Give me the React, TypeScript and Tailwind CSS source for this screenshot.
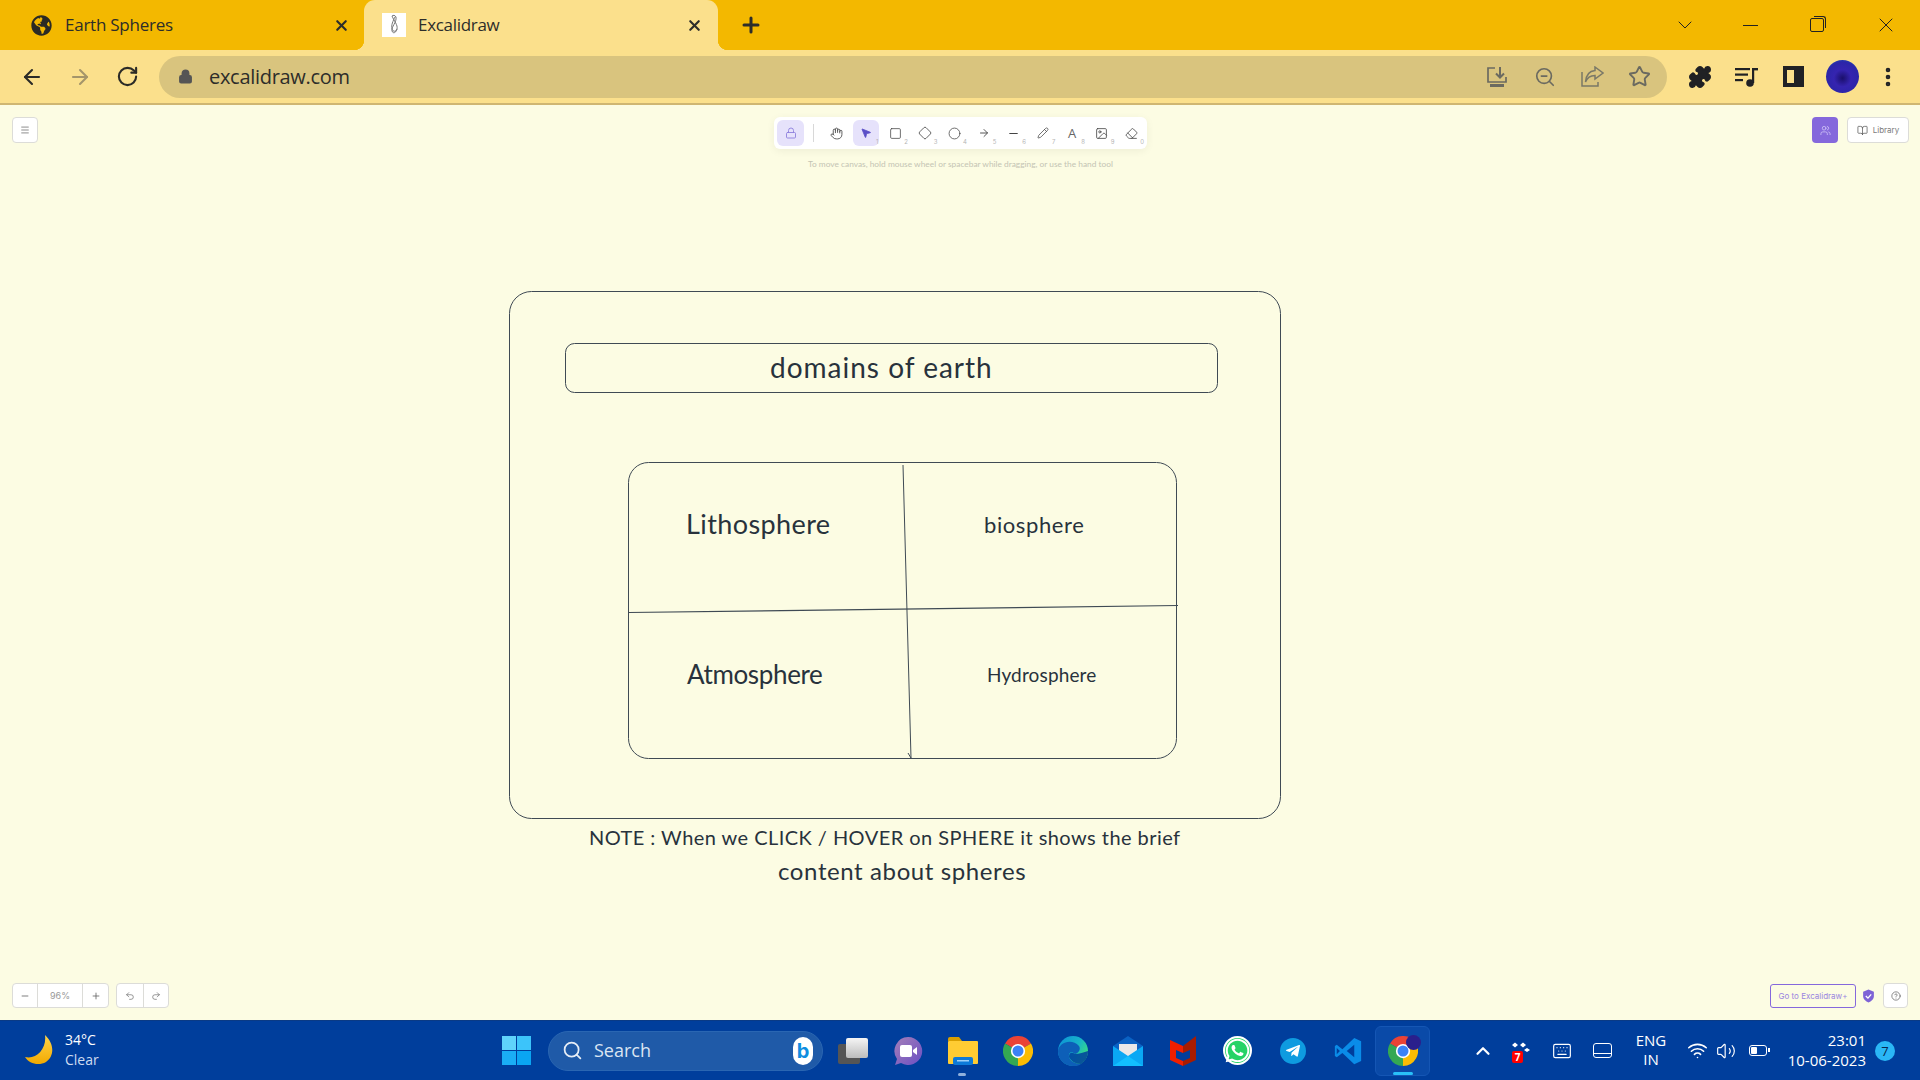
import React from "react";
import {
  ArrowLeft, ArrowRight, RotateCw, Lock, Plus, X, ChevronDown, Minus, ZoomOut, Star, Search, Menu, Users, BookOpen,
  Undo2, Redo2, CircleHelp, Wifi, Volume2, Keyboard, ChevronUp, Hand, MousePointer2, Square, Diamond, Circle, Pencil,
  Image as ImageIcon, Eraser, EllipsisVertical, Puzzle,
} from "lucide-react";
import { FaGlobeAmericas, FaWhatsapp, FaTelegramPlane } from "react-icons/fa";

const ChromeLogo = ({ size = 30 }: { size?: number }) => (
  <svg width={size} height={size} viewBox="0 0 24 24">
    <path d="M12 12L1.6 6A12 12 0 0 1 22.4 6Z" fill="#ea4335" />
    <path d="M12 12L22.4 6A12 12 0 0 1 12 24Z" fill="#fbbc04" />
    <path d="M12 12L12 24A12 12 0 0 1 1.6 6Z" fill="#34a853" />
    <circle cx="12" cy="12" r="5.7" fill="#fff" />
    <circle cx="12" cy="12" r="4.4" fill="#3b82f6" />
  </svg>
);

const DownloadMonitor = () => (
  <svg width="22" height="22" viewBox="0 0 22 22" fill="none" stroke="#6b6a60" strokeWidth="1.7">
    <path d="M9 2H2v14h18v-5" />
    <path d="M14 1v10M10 7.5l4 4 4-4" strokeWidth="2" />
    <path d="M4 19.5h14" strokeWidth="3" />
  </svg>
);

const ShareBox = () => (
  <svg width="23" height="21" viewBox="0 0 23 21" fill="none" stroke="#7a7867" strokeWidth="1.5">
    <path d="M1 6v14h16v-4" />
    <path d="M14 1l8 6-8 6V9.5C9 9.5 6 12 4.5 16 5 9.5 8.5 5 14 4.5z" />
  </svg>
);

const QueueMusic = () => (
  <svg width="24" height="20" viewBox="0 0 24 20" fill="#202124">
    <rect x="0" y="1" width="15" height="2.2" />
    <rect x="0" y="6.5" width="13" height="2.2" />
    <rect x="0" y="12" width="8" height="2.2" />
    <circle cx="15" cy="16" r="3.8" />
    <rect x="17" y="1" width="2.2" height="15" />
    <rect x="17" y="1" width="6" height="2.4" />
  </svg>
);

const tools = [
  { n: "", icon: <Hand size={13} strokeWidth={1.6} /> },
  { n: "1", icon: <MousePointer2 size={12} strokeWidth={1.6} fill="#5b4fc7" color="#5b4fc7" />, active: true },
  { n: "2", icon: <Square size={13} strokeWidth={1.4} /> },
  { n: "3", icon: <Diamond size={14} strokeWidth={1.4} /> },
  { n: "4", icon: <Circle size={13} strokeWidth={1.4} /> },
  { n: "5", icon: <ArrowRight size={12} strokeWidth={1.8} /> },
  { n: "6", icon: <Minus size={13} strokeWidth={2} /> },
  { n: "7", icon: <Pencil size={12} strokeWidth={1.5} /> },
  { n: "8", icon: <span className="text-[13px] leading-none font-medium text-[#666]">A</span> },
  { n: "9", icon: <ImageIcon size={13} strokeWidth={1.5} /> },
  { n: "0", icon: <Eraser size={13} strokeWidth={1.5} /> },
];

const Sketch = ({ className, children }: { className: string; children: React.ReactNode }) => (
  <div className={`absolute whitespace-nowrap leading-none text-[#28323c] font-normal font-['Lato','Noto_Sans',sans-serif] ${className}`}>
    {children}
  </div>
);

const TaskIcon = ({ children, dot, active }: { children: React.ReactNode; dot?: boolean; active?: boolean }) => (
  <div className={`relative w-[55px] h-[50px] flex items-center justify-center rounded-md ${active ? "bg-[#0a4aa8] border border-[#1556b4]" : ""}`}>
    {children}
    {dot && <span className="absolute bottom-[0px] left-[23px] w-[8px] h-[3px] rounded-full bg-[#8fb0dc]" />}
    {active && <span className="absolute bottom-[0px] left-[17px] w-[20px] h-[3px] rounded-full bg-[#29c0f8]" />}
  </div>
);

export default function App() {
  return (
    <div className="w-[1920px] h-[1080px] flex flex-col overflow-hidden font-['Open_Sans',sans-serif] text-[#2d2d2a]">
      {/* Tab strip */}
      <div className="h-[50px] shrink-0 bg-[#f3b800] flex items-stretch">
        <div className="w-[364px] flex items-center pl-[31px] pr-[14px]">
          <FaGlobeAmericas size={21} color="#2b2a24" />
          <span className="ml-[13px] text-[17px] flex-1 tracking-[-0.25px]">Earth Spheres</span>
          <X size={17} strokeWidth={3} />
        </div>
        <div className="relative w-[354px] bg-[#fbe08c] rounded-t-[11px] flex items-center pl-[18px] pr-[15px]">
          <span className="absolute left-[-10px] bottom-0 w-[10px] h-[10px] bg-[radial-gradient(circle_at_0_0,#f3b800_10px,#fbe08c_10.5px)]" />
          <span className="absolute right-[-10px] bottom-0 w-[10px] h-[10px] bg-[radial-gradient(circle_at_100%_0,#f3b800_10px,#fbe08c_10.5px)]" />
          <div className="w-[24px] h-[24px] bg-white flex items-center justify-center">
            <svg width="12" height="22" viewBox="0 0 12 22" fill="none" stroke="#777" strokeWidth="1">
              <path d="M4 2c2 5 6 9 5 13-1 4-4 5-5 2-1-4 5-9 4-14-1-2-3-2-4-1z" />
              <path d="M7 3c-2 4-4 8-3 12 1 3 4 3 5 0" />
            </svg>
          </div>
          <span className="ml-[12px] text-[17px] flex-1 tracking-[-0.3px]">Excalidraw</span>
          <X size={17} strokeWidth={3} />
        </div>
        <div className="ml-[21px] flex items-center"><Plus size={24} strokeWidth={3} /></div>
        <div className="ml-auto flex items-center text-[#222]">
          <ChevronDown size={24} strokeWidth={1} className="mr-[46px]" />
          <span className="w-[15px] h-px bg-[#222] mr-[52px]" />
          <div className="relative w-[14px] h-[14px] border border-[#222] rounded-[2px] mr-[50px] after:absolute after:content-[''] after:top-[-3px] after:right-[-3px] after:w-[12px] after:h-[12px] after:border-t after:border-r after:border-[#222] after:rounded-tr-[3px]" />
          <X size={24} strokeWidth={1} className="mr-[22px]" />
        </div>
      </div>

      {/* Address toolbar */}
      <div className="h-[55px] shrink-0 bg-[#fbe08c] border-b-2 border-[#cfb672] flex items-center">
        <div className="w-[159px] flex items-center text-[#2b2b27] pl-[20px]">
          <ArrowLeft size={24} strokeWidth={2.1} />
          <ArrowRight size={24} strokeWidth={2.1} className="ml-[24px] text-[#a4956a]" />
          <RotateCw size={23} strokeWidth={2.2} className="ml-[24px]" />
        </div>
        <div className="w-[1508px] h-[42px] rounded-full bg-[#d9c47e] flex items-center pl-[19px]">
          <Lock size={15} strokeWidth={2.6} fill="#555" color="#555" />
          <span className="ml-[16px] text-[20px] tracking-[-0.3px]">excalidraw.com</span>
          <div className="ml-auto flex items-center text-[#6b6a60]">
            <DownloadMonitor />
            <ZoomOut size={22} strokeWidth={1.8} className="ml-[26px]" />
            <div className="ml-[25px]"><ShareBox /></div>
            <Star size={23} strokeWidth={2} className="ml-[24px] mr-[16px]" />
          </div>
        </div>
        <div className="flex items-center text-[#202124]">
          <Puzzle size={24} fill="#202124" strokeWidth={2} className="ml-[21px]" />
          <div className="ml-[23px]"><QueueMusic /></div>
          <div className="ml-[24px] w-[21px] h-[21px] border-[4px] border-[#202124] border-r-[10px]" />
          <div className="ml-[22px] w-[33px] h-[33px] rounded-full bg-[radial-gradient(circle_at_50%_55%,#1a0f6b_0%,#3524b0_35%,#2c25a8_65%,#0d6fc0_100%)]" />
          <EllipsisVertical size={24} strokeWidth={2.6} className="ml-[17px]" />
        </div>
      </div>

      {/* Canvas */}
      <div className="relative flex-1 bg-[#fcfce3] flex flex-col justify-between">
        <svg className="absolute inset-0 w-full h-full" viewBox="0 0 1920 915" fill="none" stroke="#3f4a54" strokeWidth="1">
          <rect x="509.5" y="186.5" width="771" height="527" rx="22" />
          <rect x="565.5" y="238.5" width="652" height="49" rx="9" />
          <rect x="628.5" y="357.5" width="548" height="296" rx="20" />
          <path d="M903 360L911 653M908 648l3 5" />
          <path d="M629 507.5L1178 500.5" strokeWidth="1.2" />
        </svg>
        <Sketch className="left-[770px] top-[248px] text-[28px] tracking-[1px]">domains of earth</Sketch>
        <Sketch className="left-[686px] top-[405px] text-[27px] tracking-[0.4px]">Lithosphere</Sketch>
        <Sketch className="left-[984px] top-[409px] text-[22px] tracking-[0.6px]">biosphere</Sketch>
        <Sketch className="left-[687px] top-[556px] text-[26px] tracking-[-0.35px]">Atmosphere</Sketch>
        <Sketch className="left-[987px] top-[560px] text-[19px] tracking-[0.15px]">Hydrosphere</Sketch>
        <Sketch className="left-[589px] top-[722px] text-[20px] tracking-[0.45px]">NOTE : When we CLICK / HOVER on SPHERE it shows the brief</Sketch>
        <Sketch className="left-[778px] top-[754px] text-[24px] tracking-[0.6px]">content about spheres</Sketch>

        {/* Top UI row */}
        <div className="relative flex items-start pt-[12px] pl-[12px] pr-[11px]">
          <div className="flex-1">
            <div className="w-[26px] h-[26px] bg-white border border-[#dcdcd8] rounded-[4px] flex items-center justify-center">
              <Menu size={10} color="#777" strokeWidth={2} />
            </div>
          </div>
          <div className="flex flex-col items-center">
            <div className="h-[32px] w-[373px] bg-white rounded-[6px] shadow-[0_2px_8px_rgba(0,0,0,0.06)] flex items-center pl-[3px] text-[#444]">
              <div className="w-[27px] h-[26px] rounded-[6px] bg-[#e6e2fb] flex items-center justify-center">
                <Lock size={12} color="#8d80dc" strokeWidth={1.8} />
              </div>
              <span className="mx-[9px] w-px h-[18px] bg-[#d8d8d8]" />
              <div className="flex gap-[3.5px]">
                {tools.map((t, i) => (
                  <div key={i} className={`relative w-[26px] h-[26px] rounded-[6px] flex items-center justify-center ${t.active ? "bg-[#e6e2fb]" : ""}`}>
                    {t.icon}
                    {t.n && <span className="absolute right-[0px] bottom-[0px] text-[6px] leading-[8px] text-[#b5b5b5] font-['Inter',sans-serif]">{t.n}</span>}
                  </div>
                ))}
              </div>
            </div>
            <div className="mt-[10px] text-[8.35px] leading-[11px] text-[#c4c4b4] font-['Lato',sans-serif] whitespace-nowrap">
              To move canvas, hold mouse wheel or spacebar while dragging, or use the hand tool
            </div>
          </div>
          <div className="flex-1 flex justify-end gap-[9px]">
            <div className="w-[26px] h-[26px] rounded-[4px] bg-[#8568dc] flex items-center justify-center">
              <Users size={11} color="#d9cffa" strokeWidth={1.6} />
            </div>
            <div className="w-[62px] h-[26px] bg-white border border-[#dcdcd8] rounded-[4px] flex items-center justify-center gap-[5px] text-[#7b7b7b]">
              <BookOpen size={11} color="#555" strokeWidth={1.6} />
              <span className="text-[8px] font-['Inter',sans-serif]">Library</span>
            </div>
          </div>
        </div>

        {/* Bottom UI row */}
        <div className="relative flex items-center pl-[12px] pr-[12px] pb-[12px] text-[#666]">
          <div className="h-[25px] w-[97px] bg-white border border-[#dcdcd8] rounded-[4px] flex items-center">
            <div className="w-[24px] flex justify-center"><Minus size={10} strokeWidth={2} /></div>
            <div className="w-[46px] h-full border-x border-[#dcdcd8] flex items-center justify-center text-[9px] font-['Inter',sans-serif] text-[#999]">96%</div>
            <div className="w-[25px] flex justify-center"><Plus size={10} strokeWidth={2} /></div>
          </div>
          <div className="ml-[7px] h-[25px] w-[53px] bg-white border border-[#dcdcd8] rounded-[4px] flex items-center">
            <div className="w-[27px] h-full border-r border-[#dcdcd8] flex items-center justify-center"><Undo2 size={10} strokeWidth={1.6} /></div>
            <div className="flex-1 flex justify-center"><Redo2 size={10} strokeWidth={1.6} /></div>
          </div>
          <div className="ml-auto h-[24px] w-[86px] border border-[#8568dc] rounded-[3px] bg-[#fcfce3] flex items-center justify-center text-[8px] text-[#9a85e0] font-['Inter',sans-serif] whitespace-nowrap">
            Go to Excalidraw+
          </div>
          <svg className="ml-[6px]" width="13" height="14" viewBox="0 0 24 26">
            <path d="M12 1l10 4v8c0 6-5 10-10 12C7 23 2 19 2 13V5z" fill="#7e63d6" />
            <path d="M7 13l4 4 6-7" stroke="#fff" strokeWidth="2.4" fill="none" />
          </svg>
          <div className="ml-[8px] w-[25px] h-[25px] bg-white border border-[#dcdcd8] rounded-[4px] flex items-center justify-center">
            <CircleHelp size={10} color="#555" strokeWidth={1.6} />
          </div>
        </div>
      </div>

      {/* Taskbar */}
      <div className="h-[60px] shrink-0 bg-[#003e9c] border-t border-[#0a3a85] flex items-center text-white">
        <div className="w-[502px] flex items-center pl-[25px] pb-[2px]">
          <svg width="29" height="30" viewBox="0 0 29 30">
            <defs>
              <linearGradient id="moon" x1="0" y1="0" x2="0" y2="1">
                <stop offset="0" stopColor="#ffd54a" />
                <stop offset="1" stopColor="#f2a900" />
              </linearGradient>
            </defs>
            <path d="M20 0c9 8 10 21 1 27-7 4-17 2-21-5 11 3 22-8 20-22z" fill="url(#moon)" />
          </svg>
          <div className="ml-[11px] text-[14px] leading-[20px]">
            <div>34°C</div>
            <div className="text-[#cfdcf0]">Clear</div>
          </div>
        </div>
        <div className="grid grid-cols-2 gap-[1px] w-[29px] h-[29px]">
          <span className="bg-[#5fd3fb]" /><span className="bg-[#3cc4fa]" />
          <span className="bg-[#1aaef5]" /><span className="bg-[#0aa5f2]" />
        </div>
        <div className="ml-[17px] w-[275px] h-[40px] rounded-full bg-[#1f5aa8] border border-[#2a66b2] flex items-center pl-[13px] pr-[9px]">
          <Search size={21} strokeWidth={2} color="#e6edf6" />
          <span className="ml-[11px] text-[18px] text-[#dbe5f2]">Search</span>
          <div className="ml-auto w-[20px] h-[28px] rounded-[10px] bg-white flex items-center justify-center">
            <span className="text-[20px] leading-none font-bold text-[#0f8ee0] font-['Inter',sans-serif]">b</span>
          </div>
        </div>
        <div className="ml-[2px] flex items-center">
          <TaskIcon>
            <div className="relative w-[30px] h-[26px]">
              <span className="absolute left-0 bottom-0 w-[22px] h-[20px] bg-[#555] rounded-[2px]" />
              <span className="absolute right-0 top-0 w-[22px] h-[20px] bg-gradient-to-b from-[#f5f5f5] to-[#bdbdbd] rounded-[2px]" />
            </div>
          </TaskIcon>
          <TaskIcon>
            <svg width="30" height="30" viewBox="0 0 30 30">
              <defs>
                <linearGradient id="meet" x1="0" y1="0" x2="1" y2="1">
                  <stop offset="0" stopColor="#a57fb8" />
                  <stop offset="1" stopColor="#6a4fc4" />
                </linearGradient>
              </defs>
              <path d="M15 1a14 14 0 1 1-7 26l-6 2 2-6A14 14 0 0 1 15 1z" fill="url(#meet)" />
              <rect x="7" y="9" width="12" height="12" rx="2" fill="#fff" />
              <path d="M20 14l4-3v8l-4-3z" fill="#fff" />
            </svg>
          </TaskIcon>
          <TaskIcon dot>
            <svg width="30" height="28" viewBox="0 0 30 28">
              <path d="M0 2a2 2 0 0 1 2-2h9l3 4H0z" fill="#d99f00" />
              <rect x="0" y="4" width="30" height="23" rx="1" fill="#ffcc33" />
              <rect x="5" y="20" width="20" height="8" rx="2" fill="#0d7ad9" />
              <rect x="9" y="23" width="12" height="1.5" fill="#9ed0f7" />
            </svg>
          </TaskIcon>
          <TaskIcon><ChromeLogo /></TaskIcon>
          <TaskIcon>
            <svg width="30" height="30" viewBox="0 0 30 30">
              <defs>
                <linearGradient id="edge" x1="0" y1="0" x2="1" y2="0.6">
                  <stop offset="0" stopColor="#0c8fd8" />
                  <stop offset="0.6" stopColor="#17b3c9" />
                  <stop offset="1" stopColor="#3bdc7f" />
                </linearGradient>
              </defs>
              <circle cx="15" cy="15" r="15" fill="url(#edge)" />
              <path d="M0 15C1 6 14 2 21 10c2 3 0 7-4 8-3-3-7-2-6 3 1 4 6 7 12 7-3 2-5 2-8 2C6 30 0 23 0 15z" fill="#0d5fb8" />
              <path d="M17 18c4 0 9-2 13-3 0 6-3 10-7 13-6 0-10-3-12-7 0-5 3-5 6-3z" fill="#003e9c" opacity="0.85" />
            </svg>
          </TaskIcon>
          <TaskIcon>
            <svg width="30" height="30" viewBox="0 0 30 30">
              <path d="M0 10L15 0l15 10v4H0z" fill="#0a62c4" />
              <path d="M6 8h18v8l-9 5-9-5z" fill="#e8e8e8" />
              <path d="M0 10l15 10 15-10v20H0z" fill="#0aa8f4" />
              <path d="M0 30l15-10 15 10z" fill="#12bfff" />
            </svg>
          </TaskIcon>
          <TaskIcon>
            <svg width="26" height="30" viewBox="0 0 26 30">
              <path d="M0 4l13 6v7l-7-3v8l7 3v5L0 24z" fill="#f01f00" />
              <path d="M26 0v24L13 30v-5l7-3v-8l-7 3v-7z" fill="#a81c00" />
            </svg>
          </TaskIcon>
          <TaskIcon>
            <div className="w-[29px] h-[29px] rounded-full bg-[#25d366] border-[2px] border-white flex items-center justify-center">
              <FaWhatsapp size={27} color="#fff" />
            </div>
          </TaskIcon>
          <TaskIcon>
            <div className="w-[26px] h-[26px] rounded-full bg-[#0e9be0] flex items-center justify-center">
              <FaTelegramPlane size={16} color="#fff" />
            </div>
          </TaskIcon>
          <TaskIcon>
            <svg width="30" height="30" viewBox="0 0 24 24">
              <path d="M17 1.5l5.5 2.6v15.8L17 22.5 7.5 13.5 3 17l-1.5-1V8l1.5-1 4.5 3.5z" fill="#0a8ce8" />
              <path d="M17 7l-6 5 6 5z" fill="#003e9c" />
              <path d="M3 9.5v5l2.5-2.5z" fill="#003e9c" />
            </svg>
          </TaskIcon>
          <TaskIcon active>
            <div className="relative">
              <ChromeLogo />
              <span className="absolute -top-[1px] -right-[3px] w-[15px] h-[15px] rounded-full bg-[#2a1f8c]" />
            </div>
          </TaskIcon>
        </div>
        <div className="ml-auto mr-[25px] flex items-center text-[14px]">
          <div className="w-[40px] flex justify-center"><ChevronUp size={22} strokeWidth={2.4} /></div>
          <div className="w-[38px] flex justify-center">
            <div className="relative w-[20px] h-[18px]">
              <svg width="20" height="14" viewBox="0 0 20 14" fill="#fff">
                <path d="M0 3l3-2.5L6 3 3 5.5zM8 3l3-2.5L14 3l-3 2.5zM12 8l3-2 3 2-3 2z" />
              </svg>
              <span className="absolute left-0 bottom-[-3px] w-[11px] h-[12px] rounded-[2px] bg-[#f00] text-[10px] leading-[12px] text-center font-bold">7</span>
            </div>
          </div>
          <div className="w-[41px] flex justify-center"><Keyboard size={20} strokeWidth={1.4} /></div>
          <div className="w-[41px] flex justify-center">
            <div className="w-[19px] h-[15px] border-[1.5px] border-white rounded-[3px] flex flex-col">
              <span className="flex-1" />
              <span className="h-[4px] border-t-[1.5px] border-white" />
            </div>
          </div>
          <div className="w-[56px] text-center leading-[19px] text-[15px] pb-[2px]">
            <div>ENG</div>
            <div>IN</div>
          </div>
          <div className="w-[36px] flex justify-center"><Wifi size={21} strokeWidth={1.8} /></div>
          <div className="w-[22px] flex justify-center"><Volume2 size={20} strokeWidth={1.4} /></div>
          <div className="w-[42px] flex justify-center">
            <div className="relative w-[18px] h-[11px] border-[1.5px] border-white rounded-[3px] p-[1px]">
              <div className="w-[6px] h-full bg-white rounded-[1px]" />
              <span className="absolute right-[-4px] top-[2px] w-[2px] h-[4px] bg-white" />
            </div>
          </div>
          <div className="w-[87px] text-right leading-[20px] text-[15px] pb-[2px] whitespace-nowrap">
            <div>23:01</div>
            <div>10-06-2023</div>
          </div>
          <div className="ml-[9px] w-[20px] h-[20px] rounded-full bg-[#2ab7f6] text-[#07264f] text-[13px] leading-[20px] text-center">7</div>
        </div>
      </div>
    </div>
  );
}
